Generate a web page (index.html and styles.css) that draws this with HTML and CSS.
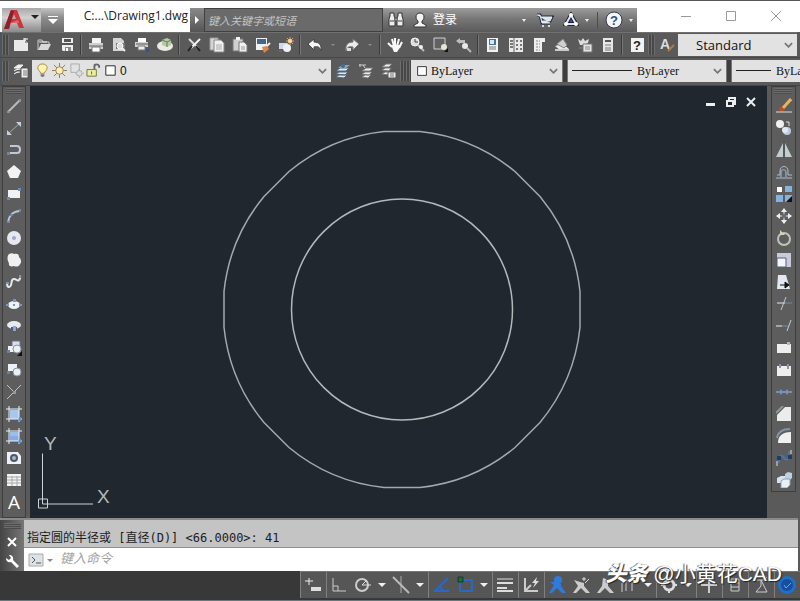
FILE: index.html
```html
<!DOCTYPE html>
<html lang="zh-CN">
<head>
<meta charset="utf-8">
<title>Drawing1.dwg</title>
<link rel="stylesheet" href="styles.css">
</head>
<body>
<header class="titlebar">
  <button class="app" aria-label="应用程序菜单">
    <svg width="41" height="24" viewBox="0 0 41 24"><path d="M3 21 10 2h6l7 18h-5l-2-5H9l-1 6z" fill="#c9363c"/><path d="M3 21 10 2l3 1-5 18z" fill="#8f1f28"/><path d="m11 11 2-5 2 5z" fill="#b9a5a5"/><path d="M9 15l8-3 1 3z" fill="#e06a6a"/><path d="M30 7h8l-4 4z" fill="#222"/></svg>
  </button>
  <button class="quick" aria-label="快速访问"><svg width="12" height="10" viewBox="0 0 12 10"><path d="M1 1h10v1H1zM1 4h10L6 9z" fill="#fff"/></svg></button>
  <h1 class="doc">C:...\Drawing1.dwg</h1>
  <button class="expand" aria-label="展开"><svg width="6" height="8" viewBox="0 0 6 8"><path d="m1 0 4 4-4 4z" fill="#fff"/></svg></button>
  <input class="search" type="text" placeholder="键入关键字或短语" aria-label="搜索">
  <div class="info">
    <button aria-label="搜索" class="w26"><svg width="18" height="16" viewBox="0 0 18 16"><path d="M3 1h4v3l1 2v8H2V7l1-3zM11 1h4v3l1 3v7h-6V6l1-2z" fill="#eee" stroke="#333"/><path d="M8 6h2v3H8zM3 9h4M11 9h4" stroke="#444" fill="#eee"/></svg></button>
    <button aria-label="登录" class="login"><svg width="16" height="16" viewBox="0 0 16 16"><path d="M8 1c3 0 4 2 4 4s-1 3-2 4v2l4 2v2H2v-2l4-2V9C5 8 4 7 4 5s1-4 4-4z" fill="#f4f4f4" stroke="#333"/></svg><span>登录</span><i class="dot"></i></button>
    <button aria-label="商店" class="w26"><svg width="18" height="16" viewBox="0 0 18 16"><path d="M1 3h3l2 8h8M5 5h11l-2 4H6" fill="#dfe5ee" stroke="#1f2b44" stroke-width="3"/><path d="M1 3h3l2 8h8M5 5h11l-2 4H6" fill="#dfe5ee" stroke="#eee"/><circle cx="7" cy="14" r="1" fill="#fff"/><circle cx="13" cy="14" r="1" fill="#fff"/></svg></button>
    <button aria-label="连接" class="w36"><svg width="16" height="16" viewBox="0 0 16 16"><path d="M8 3 3 12h10z" fill="#3c5684" stroke="#223" stroke-width="4"/><path d="M8 3 3 12h10z" fill="none" stroke="#dde6f5" stroke-width="2"/><circle cx="8" cy="3" r="2" fill="#fff"/><circle cx="3" cy="12" r="2" fill="#fff"/><circle cx="13" cy="12" r="2" fill="#fff"/></svg><i class="dot"></i></button>
    <i class="rule"></i>
    <button aria-label="帮助" class="w36"><svg width="18" height="18" viewBox="0 0 18 18"><circle cx="9" cy="9" r="8" fill="#f5f7fa" stroke="#333a48"/><text x="9" y="14" class="q">?</text></svg><i class="dot"></i></button>
  </div>
  <div class="win">
    <button aria-label="最小化"><svg width="12" height="12" viewBox="0 0 12 12"><path d="M1 6.500h10" stroke="#999"/></svg></button>
    <button aria-label="最大化"><svg width="12" height="12" viewBox="0 0 12 12"><path d="M1.500 1.500h9v9h-9z" fill="none" stroke="#999"/></svg></button>
    <button aria-label="关闭"><svg width="12" height="12" viewBox="0 0 12 12"><path d="m1 1 10 10M11 1 1 11" stroke="#999"/></svg></button>
  </div>
</header>

<nav class="bar standard" aria-label="标准">
  <i class="grip"></i>
  <button aria-label="新建"><svg viewBox="0 0 16 16"><path d="M1 3h11l3 3v8H1z" fill="#e9e9e9"/><path d="M12 3v3h3z" fill="#999"/><path d="M12 1v3M10 2h5" stroke="#fff"/></svg></button>
  <button aria-label="打开"><svg viewBox="0 0 16 16"><path d="M2 13V3h4l1 2h6v2" fill="none" stroke="#ccc"/><path d="M2 13 5 7h10l-3 6z" fill="#d9d9d9"/><path d="M3 5h8" stroke="#eee"/></svg></button>
  <button aria-label="保存"><svg viewBox="0 0 16 16"><path d="M3 1h11v13H4l-1-1z" fill="#eee"/><path d="M5 2h7v3H5z" fill="#555"/><path d="M3 7h11" stroke="#555" stroke-width="2"/><path d="M6 10h6v4H6z" fill="#888"/><path d="M7 11h2v3H7z" fill="#fff"/></svg></button>
  <i class="sep"></i>
  <button aria-label="打印"><svg viewBox="0 0 16 16"><path d="M4 1h9v5H4z" fill="#f4f4f4"/><path d="M1 6h14v6H1z" fill="#cfcfcf"/><path d="M1 9h14" stroke="#666"/><path d="M4 10h8v5H4z" fill="#fff" stroke="#777"/></svg></button>
  <button aria-label="打印预览"><svg viewBox="0 0 16 16"><path d="M2 1h8l3 3v10H2z" fill="#d6d6d6"/><path d="M5 6h9v6H5z" fill="#777"/><circle cx="9" cy="9" r="3" fill="#ddd" stroke="#fff"/><path d="m11 11 3 3" stroke="#eee" stroke-width="2"/></svg></button>
  <button aria-label="发布"><svg viewBox="0 0 16 16"><path d="M4 1h8v4H4z" fill="#fff"/><path d="M1 5h13v5H1z" fill="#d3d3d3"/><path d="M2 7h12" stroke="#555"/><path d="M4 9h7v4H4z" fill="#eee" stroke="#777"/><path d="M12 12h3v3h-3z" fill="#334fa0"/></svg></button>
  <button aria-label="三维打印"><svg viewBox="0 0 16 16"><ellipse cx="8" cy="9" rx="8" ry="5" fill="#e8ece4"/><path d="m5 3 5-2 4 2v5l-4 2-5-2z" fill="#b7c8a4"/><path d="m5 3 5 2 4-2M10 5v5" stroke="#63805a" fill="none"/></svg></button>
  <i class="sep"></i>
  <button aria-label="剪切"><svg viewBox="0 0 16 16"><path d="m3 2 9 9" stroke="#ddd" stroke-width="2"/><path d="m14 2-9 9" stroke="#f5f5f5" stroke-width="2"/><path d="m6 9-4 5M10 9l4 5" stroke="#222" stroke-width="2"/></svg></button>
  <button aria-label="复制"><svg viewBox="0 0 16 16"><path d="M1 1h8v12H1z" fill="#d5d5d5" stroke="#999"/><path d="M5 3h7l3 3v9H5z" fill="#f0f0f0" stroke="#888"/><path d="M7 8h6M7 10h6M7 12h6" stroke="#aaa"/></svg></button>
  <button aria-label="粘贴"><svg viewBox="0 0 16 16"><path d="M1 2h10v12H1z" fill="#cfcfcf" stroke="#777"/><path d="M4 0h4v3H4z" fill="#f3f3f3"/><path d="M7 5h5l3 3v7H7z" fill="#f0f0f0" stroke="#777"/><path d="M9 10h4M9 12h4" stroke="#999"/></svg></button>
  <button aria-label="特性匹配"><svg viewBox="0 0 16 16"><path d="M1 1h11v12H1z" fill="#f1f1f1"/><path d="M2 2h9v5H2z" fill="#41698f"/><path d="m15 6-4 4" stroke="#eee" stroke-width="2"/><path d="m7 10 5-1 2 3-5 4z" fill="#d98a4b"/></svg></button>
  <button aria-label="块编辑器"><svg viewBox="0 0 16 16"><path d="M1 6h8v6H1z" fill="#ccdaf0"/><circle cx="9" cy="11" r="4" fill="#eef2f8"/><path d="M12 0v8M8 4h8M9 1l6 6M15 1 9 7" stroke="#e0a25a"/><circle cx="12" cy="4" r="2" fill="#ffd9a0"/><path d="M1 13h3v2H1z" fill="#9e5242"/></svg></button>
  <i class="sep"></i>
  <button aria-label="放弃"><svg viewBox="0 0 16 16"><path d="M1 7 7 2v3c5 0 8 3 7 9-1-4-3-5-7-4v3z" fill="#f4f4f4" stroke="#444"/></svg></button>
  <button class="caret" aria-label="放弃列表"><i></i></button>
  <button aria-label="重做"><svg viewBox="0 0 16 16"><path d="m15 7-6-5v3C4 5 1 8 2 14c1-4 3-5 7-4v3z" fill="#ececec" stroke="#777"/><path d="M3 11h4v3H3z" fill="#ddd"/></svg></button>
  <button class="caret" aria-label="重做列表"><i></i></button>
  <i class="sep"></i>
  <button aria-label="平移"><svg viewBox="0 0 16 16"><path d="m1 6 4 4M5 2l2 7M8 1v8M12 2l-2 7M15 5l-3 6" stroke="#fafafa" stroke-width="2"/><path d="M4 8h9l-1 4-2 3H7z" fill="#fafafa"/></svg></button>
  <button aria-label="实时缩放"><svg viewBox="0 0 16 16"><circle cx="5" cy="5" r="4" fill="#d8dedd" stroke="#f3f3f3"/><path d="M5 2v3h3" stroke="#444" fill="none"/><path d="m8 8 6 6" stroke="#bbb" stroke-width="2"/><circle cx="11" cy="10" r="2" fill="#f3f3f3"/></svg></button>
  <button aria-label="窗口缩放"><svg viewBox="0 0 16 16"><path d="M1 1h11v11H1z" fill="#626262" stroke="#cfcfcf"/><circle cx="11" cy="10" r="3" fill="#e5e5d8"/><path d="m11 15 4-4v4z" fill="#111"/></svg></button>
  <button aria-label="缩放上一个"><svg viewBox="0 0 16 16"><path d="m0 4 4-3v2h5v3H4v1z" fill="#bdbdbd"/><circle cx="9" cy="9" r="3" fill="#e9e9e9"/><path d="m11 11 4 4" stroke="#bbb" stroke-width="2"/></svg></button>
  <i class="sep"></i>
  <button aria-label="特性"><svg viewBox="0 0 16 16"><path d="M2 1h11v14H2z" fill="#f0f4f8"/><path d="M4 2h7v6H4z" fill="#4a7390"/><path d="M5 3h4v4H5z" fill="#d7e5ef"/><path d="M4 10h7M4 12h7" stroke="#777"/></svg></button>
  <button aria-label="设计中心"><svg viewBox="0 0 16 16"><path d="M1 1h14v14H1z" fill="#e9e9e9"/><path d="M2 4h3M2 7h3M2 10h3M8 4h2M12 4h2M8 8h2M12 8h2M8 12h2M12 12h2" stroke="#777" stroke-width="2"/><path d="M6 1v14" stroke="#666"/></svg></button>
  <button aria-label="工具选项板"><svg viewBox="0 0 16 16"><path d="M3 1h11v4h-3v10H3z" fill="#eee"/><path d="M5 4h4M5 7h4M5 10h4M5 13h4" stroke="#888" stroke-dasharray="2 1"/></svg></button>
  <button aria-label="图纸集"><svg viewBox="0 0 16 16"><path d="m1 9 8-2 6 5-8 2z" fill="#e9e9e9"/><path d="m3 7 6-5 4 6-3 3z" fill="#d0d0d0" stroke="#888"/><path d="M1 12h14v2H1z" fill="#ccc"/></svg></button>
  <button aria-label="标记集"><svg viewBox="0 0 16 16"><path d="m1 2 3 2 2-3 2 3 4-2-1 4-4 2H3z" fill="#ddd"/><path d="M6 7h9v8H6z" fill="#e5e5e5" stroke="#777"/><path d="M8 10h5M8 12h5M2 11h3" stroke="#888"/></svg></button>
  <button aria-label="快速计算器"><svg viewBox="0 0 16 16"><path d="M3 1h10v14H3z" fill="#e7e7e7"/><path d="M5 3h6v2H5z" fill="#555"/><path d="M5 8h6M5 11h6M5 13h6" stroke="#777"/></svg></button>
  <i class="sep"></i>
  <button aria-label="帮助"><svg viewBox="0 0 16 16"><path d="M2 1h13v14H2z" fill="#f2f2f2"/><text x="8" y="13" class="q dark">?</text></svg></button>
  <i class="grip"></i>
  <button aria-label="文字样式" class="style"><svg viewBox="0 0 16 16"><text x="6" y="12" class="big">A</text><path d="m15 8-6 6" stroke="#b57b3e" stroke-width="2"/></svg></button>
  <label class="combo grow std"><select aria-label="文字样式"><option>Standard</option></select><svg class="chev" viewBox="0 0 10 6"><path d="m1 1 4 4 4-4"/></svg></label>
</nav>

<nav class="bar props" aria-label="图层">
  <i class="grip"></i>
  <button aria-label="图层特性"><svg viewBox="0 0 16 16"><path d="m1 5 4-3h5L7 5zM1 8l3-2h4M1 11l3-2h3" fill="#f0f0f0" stroke="#eee"/><path d="M8 5h7v10H8z" fill="#f1f1f1" stroke="#555"/><path d="M10 8h4M10 10h4M10 12h4" stroke="#777"/></svg></button>
  <label class="combo layer">
    <svg viewBox="0 0 16 16"><path d="M8 1c3 0 5 2 5 4 0 3-3 4-3 6H6C6 9 3 8 3 5c0-2 2-4 5-4z" fill="#fff3b0" stroke="#a08a3c"/><path d="M6 12h4v2l-2 1-2-1z" fill="#777"/></svg>
    <svg viewBox="0 0 16 16"><path d="M8 0v16M0 8h16M2 2l12 12M14 2 2 14" stroke="#8b7c45"/><circle cx="8" cy="8" r="4" fill="#ffeebb" stroke="#9c8544"/></svg>
    <svg viewBox="0 0 16 16"><path d="M2 1h9v9H2z" fill="none" stroke="#aaa"/><circle cx="11" cy="11" r="3" fill="#ddd" stroke="#aaa"/><path d="M11 6v2M15 11h1M11 14v2M7 12h1" stroke="#aaa"/></svg>
    <svg viewBox="0 0 16 16"><path d="M9 7V3c0-2 4-2 5 0v2" fill="none" stroke="#666" stroke-width="2"/><path d="M1 7h10v7H1z" fill="#eef0a0" stroke="#6f7340"/><path d="M6 9v3" stroke="#555"/></svg>
    <svg viewBox="0 0 16 16"><path d="M3 3h10v10H3z" fill="#fff" stroke="#222"/></svg>
    <select aria-label="图层"><option>0</option></select><svg class="chev" viewBox="0 0 10 6"><path d="m1 1 4 4 4-4"/></svg>
  </label>
  <button aria-label="置为当前"><svg viewBox="0 0 16 16"><path d="m1 8 4-3h9l-3 3zM1 11l3-2h9l-3 3zM1 14l3-2h8l-3 3z" fill="#dbe9f3" stroke="#567"/><path d="m3 5 4-3h8l-4 3z" fill="#7fa8c4"/><circle cx="8" cy="3" r="2" fill="#3d6f96"/></svg></button>
  <button aria-label="上一个图层"><svg viewBox="0 0 16 16"><path d="m4 8 4-3h7l-3 3zM4 11l3-2h7l-3 3zM4 14l3-2h6l-3 3z" fill="#eee" stroke="#777"/><path d="M1 2h7M2 1v3M5 2l2 3" stroke="#ccc"/></svg></button>
  <button aria-label="图层状态"><svg viewBox="0 0 16 16"><path d="m1 4 4-3h6L8 4zM1 7l3-2h6L8 8zM1 11l3-2h4v3z" fill="#eee" stroke="#777"/><path d="M7 9h8v6H7z" fill="#f0f0f0" stroke="#555"/><path d="M9 11h4M9 13h4" stroke="#777"/></svg></button>
  <i class="grip wide"></i>
  <label class="combo color"><svg viewBox="0 0 16 16"><path d="M3 3h10v10H3z" fill="#fff" stroke="#222"/></svg><select aria-label="颜色"><option>ByLayer</option></select><svg class="chev" viewBox="0 0 10 6"><path d="m1 1 4 4 4-4"/></svg></label>
  <i class="split"></i>
  <label class="combo ltype"><i class="line"></i><select aria-label="线型"><option>ByLayer</option></select><svg class="chev" viewBox="0 0 10 6"><path d="m1 1 4 4 4-4"/></svg></label>
  <i class="split"></i>
  <label class="combo grow lweight"><i class="line"></i><select aria-label="线宽"><option>ByLayer</option></select></label>
</nav>

<main class="work">
  <nav class="side left" aria-label="绘图">
    <i class="hgrip"></i>
    <button aria-label="直线"><svg viewBox="0 0 16 16"><path d="M2 14 14 2" stroke="#bbb" stroke-width="2"/><path d="M1 13h3v2H1zM13 1h2v3h-2z" fill="#8492aa"/></svg></button>
    <button aria-label="构造线"><svg viewBox="0 0 16 16"><path d="M2 14 14 3" stroke="#a9a9a9"/><path d="M10 2h5v5zM1 10v5h5z" fill="#c3cfe2"/></svg></button>
    <button aria-label="多段线"><svg viewBox="0 0 16 16"><path d="M4 4h7c4 0 4 7 0 7H2" fill="none" stroke="#bfc8d6" stroke-width="2"/><path d="M1 10h3v3H1z" fill="#7084a8"/></svg></button>
    <button aria-label="多边形"><svg viewBox="0 0 16 16"><path d="m8 1 7 6-3 7H4L1 7z" fill="#f0f2f3"/></svg></button>
    <button aria-label="矩形"><svg viewBox="0 0 16 16"><path d="M2 4h12v8H2z" fill="#eef1f6"/><path d="M12 2h3v3h-3zM1 11h3v3H1z" fill="#7088b4"/></svg></button>
    <button aria-label="圆弧"><svg viewBox="0 0 16 16"><path d="M2 14C3 8 7 3 14 3" fill="none" stroke="#b8c6da" stroke-width="2"/><path d="M13 1h2v3h-2zM1 13h3v2H1zM4 6h3v2H4z" fill="#7186ab"/></svg></button>
    <button aria-label="圆"><svg viewBox="0 0 16 16"><circle cx="8" cy="8" r="7" fill="#e6eaf0"/><circle cx="8" cy="8" r="2" fill="#9cabc2"/></svg></button>
    <button aria-label="修订云线"><svg viewBox="0 0 16 16"><path d="M3 2c2-1 4-1 5 0 3-1 5 0 5 3 2 2 3 5 1 7-1 3-4 3-6 2-3 1-6 0-5-3-2-3-2-7 0-9z" fill="#eef0f1"/></svg></button>
    <button aria-label="样条曲线"><svg viewBox="0 0 16 16"><path d="M1 9c0 5 3 5 4 2s0-6 3-6 3 3 5 1 1-3 1-5" fill="none" stroke="#e6e8eb" stroke-width="2"/><path d="M0 8h3v2H0zM13 1h2v3h-2z" fill="#8193b4"/></svg></button>
    <button aria-label="椭圆"><svg viewBox="0 0 16 16"><ellipse cx="8" cy="9" rx="6" ry="4" fill="#eef1f6"/><path d="M7 3h3v3H7zM0 8h3v2H0zM13 8h3v2h-3zM7 8h2v2H7z" fill="#7e94bd"/></svg></button>
    <button aria-label="椭圆弧"><svg viewBox="0 0 16 16"><ellipse cx="8" cy="7" rx="7" ry="4" fill="#e6eaf2"/><path d="M5 9h6v4H5z" fill="#575b65"/><path d="M7 8h3v5H7z" fill="#8fa4ca"/></svg></button>
    <button aria-label="插入块"><svg viewBox="0 0 16 16"><path d="M6 1h8v6H6z" fill="#d9e1ed" stroke="#67738a"/><path d="M2 6h7v6H2z" fill="#f0f2f5"/><circle cx="11" cy="9" r="4" fill="#eef1f6" stroke="#8b94a5"/><path d="M1 10h3v3H1z" fill="#6580ae"/><path d="M16 11v5h-5z" fill="#111"/></svg></button>
    <button aria-label="创建块"><svg viewBox="0 0 16 16"><path d="M2 2h9v7H2z" fill="#eef1f6"/><circle cx="11" cy="10" r="4" fill="#eceff1" stroke="#8b94a5"/><path d="M1 9h3v3H1z" fill="#6580ae"/></svg></button>
    <button aria-label="点"><svg viewBox="0 0 16 16"><path d="m1 1 7 7M1 15 15 1" fill="none" stroke="#c4c4c4"/><path d="M7 7h3v3H7z" fill="#8799b4"/></svg></button>
    <button aria-label="图案填充"><svg viewBox="0 0 16 16"><path d="M4 4h9v9H4z" fill="#a9c6ec"/><path d="M3 0v16M13 0v16M0 3h16M0 13h16" stroke="#edf2f8"/><path d="M13 11h2v4h-3z" fill="#6491cf"/></svg></button>
    <button aria-label="渐变色"><svg viewBox="0 0 16 16"><path d="M4 4h9v9H4z" fill="#86ace2"/><path d="M4 4h9v4H4z" fill="#9dbdea"/><path d="M3 0v16M13 0v16M0 3h16M0 13h16" stroke="#edf2f8"/><path d="M13 11h2v4h-3z" fill="#6491cf"/></svg></button>
    <button aria-label="面域"><svg viewBox="0 0 16 16"><path d="M1 2h11l3 4v8H1z" fill="#eef0f1"/><circle cx="8" cy="8" r="3" fill="#a9b4c7" stroke="#4c586f" stroke-width="2"/></svg></button>
    <button aria-label="表格"><svg viewBox="0 0 16 16"><path d="M1 2h14v12H1z" fill="#f4f4f4"/><path d="M1 5h14M1 8h14M1 11h14M6 4v10M11 4v10" stroke="#a6a6a6"/></svg></button>
    <button aria-label="多行文字" class="text">A</button>
  </nav>

  <section class="canvas" aria-label="图形">
    <svg class="drawing" viewBox="0 0 737 431" preserveAspectRatio="xMidYMid meet" fill="none">
      <g transform="translate(372 223)" stroke="#a5a9ad" stroke-width="1.500">
        <path d="M-18-178H18A179 179 0 0 1 113-138L138-113A179 179 0 0 1 178-18V18A179 179 0 0 1 138 113L113 138A179 179 0 0 1 18 178H-18A179 179 0 0 1-113 138L-138 113A179 179 0 0 1-178 18V-18A179 179 0 0 1-138-113L-113-138A179 179 0 0 1-18-178z"/>
        <circle r="110.500" stroke="#b4b8bb"/>
      </g>
      <path d="M8.500 412.500h9v9h-9zM12.500 367v50.500H63" stroke="#d0d3d5"/>
      <text x="14" y="363" class="axis">Y</text><text x="67" y="416" class="axis">X</text>
    </svg>
    <div class="mdi">
      <button aria-label="最小化"><svg width="12" height="12" viewBox="0 0 12 12"><path d="M1 7h9v3H1z" fill="#eee"/></svg></button>
      <button aria-label="还原"><svg width="12" height="12" viewBox="0 0 12 12"><path d="M4 4V2h6v6H8M2 5h6v5H2z" fill="none" stroke="#eee" stroke-width="2"/></svg></button>
      <button aria-label="关闭"><svg width="12" height="12" viewBox="0 0 12 12"><path d="m2 2 8 8M10 2l-8 8" stroke="#eee" stroke-width="2"/></svg></button>
    </div>
  </section>

  <nav class="side right" aria-label="修改">
    <i class="hgrip"></i>
    <button aria-label="删除"><svg viewBox="0 0 16 16"><path d="m15 1-8 9" stroke="#e9b35c" stroke-width="3"/><path d="m4 8 5 4-4 2-2-2z" fill="#bb4d27"/><path d="M0 14h16" stroke="#ddd"/></svg></button>
    <button aria-label="复制"><svg viewBox="0 0 16 16"><circle cx="4" cy="4" r="4" fill="#eef0f2"/><circle cx="11" cy="11" r="4" fill="#b9cbe2"/><circle cx="9" cy="10" r="3" fill="#e2eaf4"/><path d="M10 2h3v4" stroke="#ddd" fill="none"/></svg></button>
    <button aria-label="镜像"><svg viewBox="0 0 16 16"><path d="M7 1v14H0zM9 1v14h7z" fill="#c2cdce"/><path d="M8 0v16" stroke="#46535d"/></svg></button>
    <button aria-label="偏移"><svg viewBox="0 0 16 16"><path d="M0 14h16M1 11h3V7c0-6 8-6 8 0v4h4M5 13V8c0-3 5-3 5 0v5" fill="none" stroke="#a8bed3"/></svg></button>
    <button aria-label="阵列"><svg viewBox="0 0 16 16"><path d="M1 1h5v5H1z" fill="#fff"/><path d="M9 0h7v6H9zM0 9h7v7H0zM9 9h7v7H9z" fill="#86b2df"/><path d="M16 10v6h-6z" fill="#111"/></svg></button>
    <button aria-label="移动"><svg viewBox="0 0 16 16"><path d="m8 0 3 4H5zM8 16l3-4H5zM0 8l4-3v6zM16 8l-4-3v6z" fill="#f0f0f0"/><path d="M8 3v10M3 8h10" stroke="#eee"/><circle cx="8" cy="8" r="2" fill="#596b7c"/></svg></button>
    <button aria-label="旋转"><svg viewBox="0 0 16 16"><circle cx="8" cy="9" r="6" fill="none" stroke="#bcc5b9" stroke-width="2"/><path d="M4 0v5h5z" fill="#cfd4bd"/></svg></button>
    <button aria-label="缩放"><svg viewBox="0 0 16 16"><path d="M1 1h14v14H1z" fill="#c9cadd"/><path d="M1 6h9v9H1z" fill="#f6f6fa" stroke="#555f79"/></svg></button>
    <button aria-label="拉伸"><svg viewBox="0 0 16 16"><path d="M2 1h8l4 14H1z" fill="#e1e8f1"/><path d="M4 11h7M9 8l4 3-4 3z" stroke="#111" fill="#111"/></svg></button>
    <button aria-label="修剪"><svg viewBox="0 0 16 16"><path d="M1 7h8" stroke="#e2e7ee"/><path d="M9 7h7" stroke="#718baa"/><path d="M10 1 5 14" stroke="#bbc7d5"/></svg></button>
    <button aria-label="延伸"><svg viewBox="0 0 16 16"><path d="M0 8h6" stroke="#eee"/><path d="M6 8h6" stroke="#7290b3"/><path d="m15 2-4 11" stroke="#c3cedb"/></svg></button>
    <button aria-label="打断于点"><svg viewBox="0 0 16 16"><path d="M1 4h14v9H1z" fill="#eee"/><path d="M11 2h3v3h-3z" fill="#aeb9c6"/></svg></button>
    <button aria-label="打断"><svg viewBox="0 0 16 16"><path d="M1 4h14v10H1z" fill="#eee"/><path d="M3 2h2v4H3zM11 2h2v5h-2z" fill="#8897a8"/></svg></button>
    <button aria-label="合并"><svg viewBox="0 0 16 16"><path d="M0 8h16" stroke="#aebdd2"/><path d="m4 5 4 3-4 3zM12 5 8 8l4 3z" fill="#6d94ca"/></svg></button>
    <button aria-label="倒角"><svg viewBox="0 0 16 16"><path d="m1 9 8-8h6v14H1z" fill="#eaedec"/><path d="m0 7 7-7" stroke="#8b989d" stroke-width="2"/></svg></button>
    <button aria-label="圆角"><svg viewBox="0 0 16 16"><path d="M2 15c0-7 4-11 13-11v11z" fill="#f0f0f2"/><path d="M1 10c1-6 5-9 13-9" stroke="#8395aa" stroke-width="2" fill="none"/></svg></button>
    <button aria-label="光顺曲线"><svg viewBox="0 0 16 16"><path d="M3 13V8c0-3 4-3 5 0 1 2 5 2 5-1V1" fill="none" stroke="#4776a8" stroke-width="2"/><path d="M1 6h4v4H1zM12 5h4v4h-4z" fill="#203c60"/><path d="M1 11v5M15 0v4" stroke="#e8e0c8"/></svg></button>
    <button aria-label="分解"><svg viewBox="0 0 16 16"><path d="m1 6 4-2h4v4l-3 3H1z" fill="#d5e3ef"/><path d="m9 2 3-2 4 1v5l-3 3H9z" fill="#bcd2e4"/><path d="m5 9 3-2h6v6l-3 3H5z" fill="#e8f0f6" stroke="#8ba1b4"/></svg></button>
  </nav>
</main>

<section class="command" aria-label="命令行">
  <div class="cmdside">
    <i class="hgrip"></i>
    <button aria-label="关闭"><svg width="10" height="10" viewBox="0 0 10 10"><path d="m1 1 8 8M9 1 1 9" stroke="#fff" stroke-width="2"/></svg></button>
    <button aria-label="自定义"><svg width="16" height="16" viewBox="0 0 16 16"><path d="M2 4c0 4 3 5 5 4l6 6 2-2-6-6c1-3-1-5-4-5l2 3-2 2z" fill="#fff"/></svg></button>
  </div>
  <div class="cmdmain">
    <p class="history">指定圆的半径或 [直径(D)] &lt;66.0000&gt;: 41</p>
    <div class="entry">
      <button aria-label="最近命令"><svg width="26" height="16" viewBox="0 0 26 16"><path d="M1 2h14v12H1z" fill="#dde2e6" stroke="#aaa"/><path d="m4 5 3 3-3 3M8 11h5" stroke="#555" fill="none"/><path d="M19 7h6l-3 3z" fill="#888"/></svg></button>
      <input type="text" placeholder="键入命令" aria-label="命令">
    </div>
  </div>
</section>

<footer class="status">
  <div class="cells">
    <div class="cell"><button aria-label="捕捉"><svg viewBox="0 0 18 18"><path d="M5 2v7M1 5h8" stroke="#eee"/><path d="M7 11h10v4H7z" fill="#ddd"/></svg></button></div>
    <div class="cell">
      <button aria-label="正交"><svg viewBox="0 0 18 18"><path d="M3 2v13h13M3 10h5v5" fill="none" stroke="#ccc"/></svg></button>
      <button aria-label="极轴"><svg viewBox="0 0 18 18"><circle cx="8" cy="9" r="6" fill="none" stroke="#ccc" stroke-width="2"/><path d="M8 9h9M8 9l5-5" stroke="#ddd"/></svg></button>
      <button class="caret" aria-label="极轴设置"><i></i></button>
      <button aria-label="等轴测"><svg viewBox="0 0 18 18"><path d="M9 0v17" stroke="#aaa"/><path d="m1 1 16 16" stroke="#bbb" stroke-width="2"/></svg></button>
      <button class="caret" aria-label="等轴测设置"><i></i></button>
    </div>
    <div class="cell">
      <button aria-label="追踪"><svg viewBox="0 0 18 18"><path d="M16 2 3 15h14M8 10l3 5" fill="none" stroke="#2d67c4" stroke-width="2"/></svg></button>
      <button aria-label="对象捕捉"><svg viewBox="0 0 18 18"><path d="M4 4h12v11H4z" fill="none" stroke="#2d67c4" stroke-width="2"/><path d="M2 1h5v5H2z" fill="#1d6b38" stroke="#123d22"/></svg></button>
      <button class="caret" aria-label="捕捉设置"><i></i></button>
    </div>
    <div class="cell"><button aria-label="线宽"><svg viewBox="0 0 18 18"><path d="M1 3h16" stroke="#ddd"/><path d="M1 7h16" stroke="#ddd" stroke-width="2"/><path d="M1 12h10M1 15h16" stroke="#ddd" stroke-width="2"/></svg></button></div>
    <div class="cell"><button aria-label="动态 UCS"><svg viewBox="0 0 18 18"><path d="M3 2v13h13M3 15l6-6" fill="none" stroke="#ccc" stroke-width="2"/><path d="m15 1-5 6h3l-2 5 6-7h-3z" fill="#ddd"/></svg></button></div>
    <div class="cell">
      <button aria-label="注释可见性"><svg viewBox="0 0 18 18"><circle cx="10" cy="4" r="4" fill="#2f7bdb"/><path d="M2 6h6l5 2v2l5 7h-4l-5-5-5 5H1l5-8z" fill="#2f7bdb"/></svg></button>
      <button aria-label="自动缩放"><svg viewBox="0 0 18 18"><path d="m2 4 6 2 4 1v3l6 7h-4l-5-5-5 5H1l5-7z" fill="#ccc"/><path d="M12 1v4M10 3h4M13 7l4-4" stroke="#ddd"/></svg></button>
      <button aria-label="注释比例"><svg viewBox="0 0 18 18"><path d="m7 2 3 1 2 4v3l6 7h-4l-5-5-5 5H1l5-7z" fill="#ccc"/></svg></button>
      <button aria-label="比例"><svg viewBox="0 0 18 18"><path d="M2 5h14M6 3v12M12 3v12M2 7v9" stroke="#ccc"/></svg></button>
      <button class="caret" aria-label="比例列表"><i></i></button>
    </div>
    <div class="cell gear"><button aria-label="工作空间"><svg viewBox="0 0 18 18"><circle cx="9" cy="9" r="5" fill="none" stroke="#ddd" stroke-width="3"/><path d="M9 1v3M9 14v3M1 9h3M14 9h3" stroke="#ddd" stroke-width="2"/></svg></button><button class="caret" aria-label="工作空间列表"><i></i></button></div>
    <div class="cell"><button aria-label="注释监视器"><svg viewBox="0 0 18 18"><path d="M9 1v16M1 9h16" stroke="#ccc" stroke-width="2"/></svg></button></div>
    <div class="cell"><button aria-label="快捷特性"><svg viewBox="0 0 18 18"><path d="M5 3h8v12H5zM5 7h8M5 11h8" fill="none" stroke="#ccc"/></svg></button></div>
    <div class="cell"><button aria-label="隔离对象"><svg viewBox="0 0 18 18"><path d="M3 4h8l4-3M9 4v6l-5 6h11z" fill="none" stroke="#ccc"/></svg></button></div>
    <div class="cell"><button aria-label="硬件加速"><svg viewBox="0 0 18 18"><circle cx="9" cy="9" r="9" fill="#1f6fcc"/><circle cx="9" cy="9" r="6" fill="#174f9e"/><path d="m6 9 2 3 5-5" stroke="#6ba8ee" fill="none"/></svg></button></div>
  </div>
  <p class="mark"><b>头条</b> @小黄花CAD</p>
</footer>
</body>
</html>
```
FILE: styles.css
```css
* { box-sizing: border-box; }
html, body { margin: 0; height: 100%; }
body {
  display: flex;
  flex-direction: column;
  min-height: 100vh;
  overflow: hidden;
  background: #5a5a5a;
  font: 12px/16px "Open Sans", "Noto Sans CJK SC", sans-serif;
  color: #222;
}
h1, p { margin: 0; font: inherit; }
button {
  display: flex;
  align-items: center;
  justify-content: center;
  flex: none;
  padding: 0;
  border: 0;
  background: none;
  color: inherit;
  font: inherit;
}
svg { flex: none; display: block; }

/* Title bar */
.titlebar {
  display: flex;
  height: 32px;
  flex: none;
  padding: 7px 0 0 2px;
  border-top: 1px solid #565656;
  background: #fff;
}
.app { width: 39px; background: linear-gradient(#a8a8a8, #d0d0d0 40%, #8a8a8a); }
.quick { width: 23px; background: linear-gradient(#c4c4c4, #8d8d8d 40%, #6a6a6a); }
.doc { width: 126px; padding-right: 2px; line-height: 16px; text-align: right; white-space: nowrap; }
.expand { width: 14px; background: linear-gradient(#8a8a8a, #555); }
.search {
  flex: 0 1 179px;
  min-width: 80px;
  padding: 0 3px;
  border: 1px solid #404040;
  background: #6a6a6a;
  color: #eee;
  font: italic 11px/16px "Noto Sans CJK SC", sans-serif;
}
.search::placeholder { color: #c4c4c4; opacity: 1; }
.info {
  display: flex;
  align-items: center;
  flex: 0 0 254px;
  background: linear-gradient(#9c9c9c, #777 45%, #5a5a5a);
  color: #fff;
}
.info button { height: 24px; }
.info .w26 { width: 26px; }
.info .w36 { width: 36px; gap: 6px; }
.info .login { flex: 1; justify-content: flex-start; gap: 5px; padding-left: 3px; }
.login .dot { margin-left: auto; margin-right: 6px; }
.dot { border: 2px solid transparent; border-top: 3px solid #eee; border-bottom: 0; }
.rule { width: 1px; height: 16px; margin: 0 3px; background: #4c4c4c; }
.q { font: bold 13px "Liberation Sans", sans-serif; fill: #33507e; text-anchor: middle; }
.q.dark { fill: #222; }
.big { font: bold 14px "Liberation Sans", sans-serif; fill: #ddd; text-anchor: middle; }
.win { display: flex; flex: 1; align-items: flex-start; justify-content: flex-end; padding-right: 2px; }
.win button { width: 45px; height: 16px; }

/* Tool rows */
.bar { display: flex; flex: none; align-items: center; border-left: 2px solid #4b5560; background: #5a5a5a; }
.standard { height: 25px; margin-right: 3px; border-top: 1px solid #707070; }
.props { height: 29px; padding-bottom: 2px; border-top: 1px solid #474747; border-bottom: 1px solid #454545; }
.bar button { width: 23px; height: 22px; }
.bar button svg { width: 16px; height: 16px; }
.bar .caret { width: 14px; }
.caret i { border: 4px solid transparent; border-top: 4px solid #f0f0f0; border-bottom: 0; }
.bar .caret i { border-width: 2px 2px 0; border-top-color: #8c8c8c; }
.grip { flex: none; width: 7px; height: 20px; background: repeating-linear-gradient(90deg, #6c6c6c 0 1px, #484848 1px 3px); }
.grip.wide { width: 11px; }
.sep { flex: none; width: 2px; height: 20px; margin: 0 2px; border-left: 1px solid #3c3c3c; border-right: 1px solid #777; }
.combo {
  display: flex;
  align-items: center;
  min-width: 0;
  height: 22px;
  padding: 0 4px;
  background: #e2e2e2;
  overflow: hidden;
}
.combo svg { width: 14px; height: 14px; margin-right: 2px; }
.combo select {
  flex: 1;
  min-width: 0;
  padding: 0;
  border: 0;
  background: none;
  appearance: none;
  color: #111;
  font: 12px/18px "Liberation Serif", "Noto Sans CJK SC", serif;
}
.combo .chev { width: 9px; height: 6px; margin: 0; fill: none; stroke: #777; stroke-width: 2; }
.grow { flex: 1; }
.std { padding-left: 18px; }
.combo.std select { font: 13px/18px "Open Sans", sans-serif; }
.layer { flex: 0 1 299px; padding-left: 3px; }
.combo.layer svg:not(.chev) { width: 15px; height: 15px; }
.combo.layer select { font-family: "Liberation Sans", sans-serif; }
.color { flex: 0 1 151px; }
.ltype { flex: 0 1 158px; }
.line { flex: none; width: 60px; height: 1px; margin-right: 5px; background: #222; }
.lweight { padding-right: 0; }
.lweight .line { width: 35px; }
.split { flex: none; width: 6px; height: 22px; border: solid #777; border-width: 0 1px; background: #3e3e3e; }

/* Work area */
.work { display: flex; flex: 1; min-height: 0; }
.side { display: flex; flex: none; flex-direction: column; align-items: center; border: 1px solid #3e3e3e; background: #5d5d5d; }
.side button { width: 22px; height: 22px; flex-shrink: 1; }
.side svg { width: 16px; height: 16px; }
.left { width: 24px; margin: 0 4px 0 2px; }
.right { width: 25px; align-self: flex-start; margin: 0 4px; }
.hgrip { flex: none; width: 17px; height: 6px; margin: 1px 0; background: repeating-linear-gradient(#6c6c6c 0 1px, #4c4c4c 1px 2px); }
.side .text { color: #fff; font: 19px/22px "Open Sans", sans-serif; }
.canvas { position: relative; flex: 1; min-width: 0; background: #21272f; }
.drawing { width: 100%; height: 100%; }
.axis { font: 19px "Liberation Sans", sans-serif; fill: #b5b9bc; }
.mdi { position: absolute; top: 9px; right: 6px; display: flex; }
.mdi button { width: 20px; height: 14px; }

/* Command line */
.command { display: flex; flex: none; margin-right: 2px; border-top: 2px solid #8b8b8b; }
.cmdside {
  display: flex;
  flex: none;
  flex-direction: column;
  align-items: center;
  justify-content: space-between;
  width: 24px;
  padding: 2px 0 1px;
  background: linear-gradient(90deg, #444, #777);
}
.cmdmain { flex: 1; min-width: 0; }
.history {
  padding: 4px 3px 0;
  height: 28px;
  border-bottom: 1px solid #8f8f8f;
  background: #c4c4c4;
  color: #1d1d1d;
  font: 12px/28px "DejaVu Sans Mono", "Noto Sans CJK SC", monospace;
}
.entry { display: flex; align-items: center; height: 23px; padding: 0 4px; gap: 6px; background: #fff; }
.entry input { flex: 1; border: 0; padding: 0 0 4px; background: none; font: italic 13px/18px "Noto Sans CJK SC", sans-serif; }
.entry input::placeholder { color: #a2a2a2; opacity: 1; }

/* Status bar */
.status { position: relative; display: flex; flex: none; justify-content: flex-end; height: 30px; padding-bottom: 2px; border-bottom: 1px solid #69777c; background: #383838; }
.cells { display: flex; border-top: 1px solid #777; background: #565656; }
.cell { display: flex; align-items: center; padding-right: 1px; border-left: 1px solid #808080; }
.cell button { width: 24px; height: 26px; }
.cell .caret { width: 14px; }
.cell svg { width: 18px; height: 18px; }
.mark {
  position: absolute;
  right: 18px;
  top: -9px;
  color: #fff;
  font: 21px/24px "Liberation Sans", "Noto Sans CJK SC", sans-serif;
  text-shadow: 1px 1px 1px #222, -1px 0 1px #555;
  white-space: nowrap;
}
.mark b { font-weight: 900; font-style: italic; }
```
